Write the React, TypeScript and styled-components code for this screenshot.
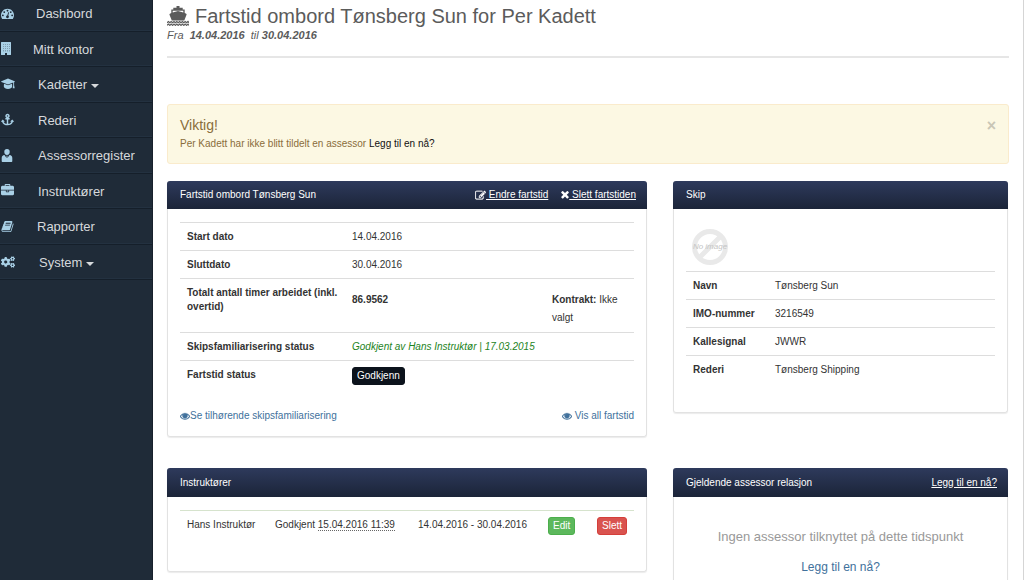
import React from "react";
import styled, { createGlobalStyle, css } from "styled-components";
import { FaAnchor, FaCogs } from "react-icons/fa";

const GlobalStyle = createGlobalStyle`
  *, *::before, *::after { box-sizing: border-box; }
  body {
    margin: 0;
    background: #fff;
    color: #333;
    font-family: "Liberation Sans", Arial, sans-serif;
    font-size: 10px;
    line-height: 14px;
  }
`;

/* ---------- icons ---------- */

const Svg = styled.svg`
  display: inline-block;
  flex: none;
  fill: currentColor;
`;

type IconProps = { size?: number };

const EyeIcon = ({ size = 10 }: IconProps) => (
  <Svg width={size} height={size} viewBox="0 0 1792 1792" stroke="currentColor" strokeWidth="60" aria-hidden>
    <path d="M1664 960q-152-236-381-353 61 104 61 225 0 185-131.5 316.5t-316.5 131.5-316.5-131.5-131.5-316.5q0-121 61-225-229 117-381 353 133 205 333.5 326.5t434.5 121.5 434.5-121.5 333.5-326.5zm-720-384q0-20-14-34t-34-14q-125 0-214.5 89.5t-89.5 214.5q0 20 14 34t34 14 34-14 14-34q0-86 61-147t147-61q20 0 34-14t14-34zm848 384q0 34-20 69-140 230-376.5 368.5t-499.5 138.5-499.5-139-376.5-368q-20-35-20-69t20-69q140-229 376.5-368t499.5-139 499.5 139 376.5 368q20 35 20 69z" />
    <circle cx="896" cy="850" r="330" />
  </Svg>
);

const TimesIcon = ({ size = 10 }: IconProps) => (
  <Svg width={size} height={size} viewBox="270 370 1250 1250" aria-hidden>
    <path d="M1490 1322q0 40-28 68l-136 136q-28 28-68 28t-68-28l-294-294-294 294q-28 28-68 28t-68-28l-136-136q-28-28-28-68t28-68l294-294-294-294q-28-28-28-68t28-68l136-136q28-28 68-28t68 28l294 294 294-294q28-28 68-28t68 28l136 136q28 28 28 68t-28 68l-294 294 294 294q28 28 28 68z" />
  </Svg>
);

const EditIcon = ({ size = 10 }: IconProps) => (
  <Svg width={size} height={size} viewBox="0 0 1792 1792" stroke="currentColor" strokeWidth="40" aria-hidden>
    <path d="M888 1184l116-116-152-152-116 116v56h96v96h56zm440-720q-16-16-33 1l-350 350q-17 17-1 33t33-1l350-350q17-17 1-33zm80 594v190q0 119-84.5 203.5t-203.5 84.5h-832q-119 0-203.5-84.5t-84.5-203.5v-832q0-119 84.5-203.5t203.5-84.5h832q63 0 117 25 15 7 18 23 3 17-9 29l-49 49q-14 14-32 8-23-6-45-6h-832q-66 0-113 47t-47 113v832q0 66 47 113t113 47h832q66 0 113-47t47-113v-126q0-13 9-22l64-64q15-15 35-7t20 29zm-96-738l288 288-672 672h-288v-288zm444 132l-92 92-288-288 92-92q28-28 68-28t68 28l152 152q28 28 28 68t-28 68z" />
  </Svg>
);

const DashboardIcon = () => (
  <Svg width={13} height={13} viewBox="0 0 1792 1792" aria-hidden>
    <path d="M384 1152q0-53-37.5-90.5t-90.5-37.5-90.5 37.5-37.5 90.5 37.5 90.5 90.5 37.5 90.5-37.5 37.5-90.5zm192-448q0-53-37.5-90.5t-90.5-37.5-90.5 37.5-37.5 90.5 37.5 90.5 90.5 37.5 90.5-37.5 37.5-90.5zm428 481l101-382q6-26-7.5-48.5t-38.5-29.5-48 6.5-30 39.5l-101 382q-60 5-107 43.5t-63 98.5q-20 77 20 146t117 89 146-20 89-117q16-60-6-117t-72-91zm660-33q0-53-37.5-90.5t-90.5-37.5-90.5 37.5-37.5 90.5 37.5 90.5 90.5 37.5 90.5-37.5 37.5-90.5zm-640-640q0-53-37.5-90.5t-90.5-37.5-90.5 37.5-37.5 90.5 37.5 90.5 90.5 37.5 90.5-37.5 37.5-90.5zm448 192q0-53-37.5-90.5t-90.5-37.5-90.5 37.5-37.5 90.5 37.5 90.5 90.5 37.5 90.5-37.5 37.5-90.5zm320 448q0 261-141 483-19 29-54 29h-1402q-35 0-54-29-141-221-141-483 0-182 71-348t191-286 286-191 348-71 348 71 286 191 191 286 71 348z" />
  </Svg>
);

const BuildingIcon = () => (
  <Svg width={10} height={13} viewBox="0 0 10 13" aria-hidden>
    <path
      fillRule="evenodd"
      d="M.5 0h9a.5.5 0 0 1 .5.5v12a.5.5 0 0 1-.5.5H6v-2H4v2H.5a.5.5 0 0 1-.5-.5V.5A.5.5 0 0 1 .5 0zM2.200 2v.6h.6V2zM4.200 2v.6h.6V2zM6.200 2v.6h.6V2zM8 2v.6h.6V2zM2.200 4.200v.6h.6v-.6zM4.200 4.200v.6h.6v-.6zM6.200 4.200v.6h.6v-.6zM8 4.200v.6h.6v-.6zM2.200 6.400v.6h.6v-.6zM4.200 6.400v.6h.6v-.6zM6.200 6.400v.6h.6v-.6zM8 6.400v.6h.6v-.6zM2.200 8.600v.6h.6v-.6zM4.200 8.600v.6h.6v-.6zM6.200 8.600v.6h.6v-.6zM8 8.600v.6h.6v-.6z"
    />
  </Svg>
);

const CapIcon = () => (
  <Svg width={14} height={12} viewBox="0 0 14 12" aria-hidden>
    <path d="M7 .5l6.600 2.700c.4.200.4.600 0 .8L7 6.500.4 4c-.4-.2-.4-.6 0-.8z" />
    <path d="M3 5.700l4 1.600 4-1.600.2 2.800C11 10 9.200 10.900 7 10.900S3 10 2.800 8.500z" />
    <path d="M12.200 3.800h.9v3.400l.6 3h-2l.5-3z" />
  </Svg>
);

const AssessorIcon = () => (
  <Svg width={12} height={13} viewBox="0 0 12 13" aria-hidden>
    <path d="M6 0a2.700 2.800 0 0 1 2.700 2.900C8.700 4.600 7.600 6 6 6S3.300 4.600 3.300 2.900A2.700 2.800 0 0 1 6 0zM3.500 6.100L5.500 9l.2-1.600-.5-.7h1.600l-.5.7.2 1.600 2-2.900c1.800.3 2.800 1.100 2.800 3V12c0 .6-.4 1-1 1H1.700c-.6 0-1-.4-1-1V9.100c0-1.900 1-2.700 2.800-3z" />
  </Svg>
);

const BriefcaseIcon = () => (
  <Svg width={13} height={13} viewBox="0 0 1792 1792" aria-hidden>
    <path d="M640 256h512v-128h-512v128zm1152 640v480q0 66-47 113t-113 47h-1472q-66 0-113-47t-47-113v-480h672v160q0 26 19 45t45 19h320q26 0 45-19t19-45v-160h672zm-768 0v128h-256v-128h256zm768-480v384h-1792v-384q0-66 47-113t113-47h352v-160q0-40 28-68t68-28h576q40 0 68 28t28 68v160h352q66 0 113 47t47 113z" />
  </Svg>
);

const BookIcon = () => (
  <Svg width={13} height={13} viewBox="0 0 1792 1792" aria-hidden>
    <path d="M1703 478q40 57 18 129l-275 906q-19 64-76.5 107.5t-122.5 43.5h-923q-77 0-148.5-53.5t-99.5-131.5q-24-67-2-127 0-4 3-27t4-37q1-8-3-21.5t-3-19.5q2-11 8-21t16.5-23.5 16.5-23.5q23-38 45-91.5t30-91.5q3-10 .5-30t-.5-28q3-11 17-28t17-23q21-36 42-92t25-90q1-9-2.5-32t.5-28q4-13 22-30.5t22-22.5q19-26 42.5-84.5t27.5-96.5q1-8-3-25.5t-2-26.5q2-8 9-18t18-23 17-21q8-12 16.5-30.5t15-35 16-36 19.5-32 26.5-23.5 36-11.5 47.5 5.500l-1 3q38-9 51-9h761q74 0 114 56t18 130l-274 906q-36 119-71.5 153.5t-128.5 34.5h-869q-27 0-38 15-11 16-1 43 24 70 144 70h923q29 0 56-15.5t35-41.5l300-987q7-22 5-57 38 15 59 43zm-1064 2q-4 13 2 22.5t20 9.500h608q13 0 25.5-9.500t16.5-22.5l21-64q4-13-2-22.5t-20-9.500h-608q-13 0-25.5 9.500t-16.5 22.5zm-83 256q-4 13 2 22.5t20 9.500h608q13 0 25.5-9.500t16.5-22.5l21-64q4-13-2-22.5t-20-9.500h-608q-13 0-25.5 9.500t-16.5 22.5z" />
  </Svg>
);

const ShipIcon = () => (
  <Svg width={22} height={20} viewBox="0 0 22 20" aria-hidden>
    <path d="M9.500 0h3v1.800h3.200V3.500h2V7l1.500.8c.5.200.6.6.3 1L17.300 14.500H4.800L2.500 8.800c-.2-.4-.1-.8.400-1L4.300 7V3.500h2V1.800h3.200zM5.700 4.700v1.700L11 4.900l5.300 1.500V4.700z" />
    <path
      d="M0 16.800l1.400-1.300 1.400 1.300 1.400-1.300 1.400 1.300L7 15.500l1.400 1.300 1.400-1.300 1.400 1.300 1.400-1.300 1.400 1.300 1.400-1.300 1.400 1.300 1.400-1.300 1.400 1.300 1.400-1.300L22 16.800M0 19.400l1.400-1.300 1.400 1.300 1.400-1.300 1.400 1.300L7 18.100l1.400 1.300 1.400-1.300 1.400 1.300 1.400-1.300 1.400 1.300 1.400-1.300 1.400 1.300 1.400-1.300 1.400 1.300 1.400-1.300L22 19.400"
      fill="none"
      stroke="currentColor"
      strokeWidth="1.200"
    />
  </Svg>
);

const NoImage = () => (
  <Svg width={38} height={38} viewBox="0 0 38 38" role="img" aria-label="No image">
    <circle cx="19" cy="19" r="15.500" fill="none" stroke="#e9e9e9" strokeWidth="5" />
    <path d="M8.500 29.500l21-21" stroke="#e9e9e9" strokeWidth="5" />
    <text x="19" y="21" textAnchor="middle" fontSize="8" fontStyle="italic" fill="#c4c4c4">
      No image
    </text>
  </Svg>
);

/* ---------- frame ---------- */

const Page = styled.div`
  display: flex;
  min-height: 100vh;
  max-height: 100vh;
  overflow: hidden;
  border-right: 1px solid #d5d5d5;
`;

const Sidebar = styled.nav`
  flex: 0 0 153px;
  background: #1f2b38;
  border-right: 1px solid #17202c;
`;

const Menu = styled.ul`
  display: grid;
  grid-auto-rows: 1fr;
  height: 284px;
  margin: -4px 0 0;
  padding: 0;
  list-style: none;
`;

const MenuItem = styled.li`
  border-bottom: 1px solid #151f2a;
  box-shadow: inset 0 -1px 0 #233140;
`;

const MenuLink = styled.a`
  display: flex;
  align-items: center;
  height: 100%;
  padding: 2px 0 0 1px;
  color: #d6d9dc;
  font-size: 13px;
  line-height: 18px;
  text-decoration: none;
`;

const MenuIcon = styled.span<{ $width: number }>`
  display: flex;
  flex: 0 0 ${(p) => p.$width}px;
  margin: 0 22px 2px 0;
  color: #a9d0e6;
`;

const Caret = styled.span`
  margin: 2px 0 0 4px;
  border: 4px solid transparent;
  border-top-color: currentColor;
  border-bottom: 0;
`;

const Main = styled.main`
  flex: 1;
  min-width: 0;
  padding: 4px 14px 0;
`;

const PageHeader = styled.header`
  margin-bottom: 46px;
  padding-bottom: 14px;
  border-bottom: 2px solid #e6e6e6;
  color: #5b5b5b;
`;

const Title = styled.h1`
  display: flex;
  align-items: center;
  gap: 6px;
  margin: 0;
  font-size: 20px;
  font-weight: 400;
  line-height: 24px;
`;

const Period = styled.p`
  margin: 0;
  font-size: 11px;
  font-style: italic;
  line-height: 14px;
  white-space: pre;
`;

/* ---------- alert ---------- */

const Alert = styled.section`
  display: flex;
  justify-content: space-between;
  align-items: flex-start;
  margin-bottom: 17px;
  padding: 11px 12px;
  border: 1px solid #faebcc;
  border-radius: 3px;
  background: #fcf8e3;
  color: #8a6d3b;
`;

const AlertTitle = styled.h2`
  margin: 0 0 2px;
  font-size: 14px;
  font-weight: 400;
  line-height: 18px;
`;

const AlertText = styled.p`
  margin: 0;
  line-height: 16px;
`;

const CloseButton = styled.button`
  padding: 0;
  border: 0;
  background: none;
  color: #c9c6b6;
  font: bold 16px/20px "Liberation Sans", Arial, sans-serif;
`;

/* ---------- links and buttons ---------- */

const Link = styled.a<{ $tone?: "dark" | "light" }>`
  color: #41719c;
  text-decoration: none;
  ${(p) => p.$tone === "dark" && css`color: #111;`}
  ${(p) => p.$tone === "light" && css`color: #fff; text-decoration: underline;`}
`;

const IconLink = styled(Link)`
  display: inline-flex;
  align-items: center;
  white-space: pre;
`;

const tones = {
  dark: ["#0c131c", "#0c131c"],
  green: ["#5cb85c", "#4cae4c"],
  red: ["#d9534f", "#d43f3a"],
};

const SmallButton = styled.button<{ $tone: keyof typeof tones }>`
  display: block;
  padding: 1px 4px;
  border: 1px solid ${(p) => tones[p.$tone][1]};
  border-radius: 3px;
  background: ${(p) => tones[p.$tone][0]};
  color: #fff;
  font: 10px/14px "Liberation Sans", Arial, sans-serif;
`;

/* ---------- panels ---------- */

const Panels = styled.div`
  display: grid;
  grid-template-columns: 480fr 335fr;
  gap: 31px 26px;
  align-items: start;
  padding-right: 1px;
`;

const Panel = styled.section`
  min-width: 0;
  border: 1px solid #e2e2e2;
  border-top: 0;
  border-radius: 3px;
  box-shadow: 0 1px 1px rgba(0, 0, 0, 0.08);
`;

const PanelHead = styled.header<{ $tall?: boolean }>`
  display: flex;
  justify-content: space-between;
  align-items: center;
  height: ${(p) => (p.$tall ? 29 : 28)}px;
  margin: 0 -1px;
  padding: 0 11px 0 13px;
  border-radius: 3px 3px 0 0;
  background: linear-gradient(#2e3a5c, #1b2438);
  color: #fff;
`;

const PanelTitle = styled.h3`
  margin: 0;
  font-size: 10px;
  font-weight: 400;
`;

const PanelActions = styled.div`
  display: flex;
  gap: 13px;
`;

const PanelBody = styled.div<{ $bottom?: number }>`
  padding: 13px 12px ${(p) => p.$bottom ?? 12}px;
`;

const Table = styled.table`
  width: 100%;
  border-collapse: collapse;
  table-layout: fixed;
`;

const cell = css`
  padding: 7px 7px 6px;
  border-top: 1px solid #ddd;
  text-align: left;
  vertical-align: top;
`;

const Th = styled.th`
  ${cell}
  font-weight: 700;
`;

const Td = styled.td<{ $roomy?: boolean; $control?: boolean; $success?: boolean }>`
  ${cell}
  ${(p) => p.$roomy && css`padding: 12px 7px 5px; line-height: 18px;`}
  ${(p) => p.$control && css`padding: 6px 7px 5px;`}
  ${(p) => p.$success && css`border-top-color: #d6e3cd;`}
`;

const Approved = styled.em`
  color: #1d831d;
`;

const Stamp = styled.abbr`
  border-bottom: 1px dotted #666;
  text-decoration: none;
`;

const FootLinks = styled.div`
  display: flex;
  justify-content: space-between;
  margin-top: 19px;
`;

const Picture = styled.div`
  display: flex;
  padding: 6px 5px 5px;
`;

const Empty = styled.div`
  padding: 18px 0 16px;
  color: #999;
  line-height: 18px;
  text-align: center;
`;

const EmptyText = styled.p<{ $small?: boolean }>`
  margin: 0 0 12px;
  font-size: ${(p) => (p.$small ? 12 : 13)}px;
`;

const menu = [
  { label: "Dashbord", icon: <DashboardIcon />, width: 11 },
  { label: "Mitt kontor", icon: <BuildingIcon />, width: 10 },
  { label: "Kadetter", icon: <CapIcon />, width: 15, sub: true },
  { label: "Rederi", icon: <FaAnchor size={13} />, width: 15 },
  { label: "Assessorregister", icon: <AssessorIcon />, width: 15 },
  { label: "Instruktører", icon: <BriefcaseIcon />, width: 15 },
  { label: "Rapporter", icon: <BookIcon />, width: 14 },
  { label: "System", icon: <FaCogs size={14} />, width: 16, sub: true },
];

const ship = [
  ["Navn", "Tønsberg Sun"],
  ["IMO-nummer", "3216549"],
  ["Kallesignal", "JWWR"],
  ["Rederi", "Tønsberg Shipping"],
];

export default function App() {
  return (
    <>
      <GlobalStyle />
      <Page>
        <Sidebar>
          <Menu>
            {menu.map((m) => (
              <MenuItem key={m.label}>
                <MenuLink href="#">
                  <MenuIcon $width={m.width}>{m.icon}</MenuIcon>
                  {m.label}
                  {m.sub && <Caret />}
                </MenuLink>
              </MenuItem>
            ))}
          </Menu>
        </Sidebar>
        <Main>
          <PageHeader>
            <Title>
              <ShipIcon />
              Fartstid ombord Tønsberg Sun for Per Kadett
            </Title>
            <Period>
              Fra{"  "}<b>14.04.2016</b>{"  "}til <b>30.04.2016</b>
            </Period>
          </PageHeader>

          <Alert role="alert">
            <div>
              <AlertTitle>Viktig!</AlertTitle>
              <AlertText>
                Per Kadett har ikke blitt tildelt en assessor{" "}
                <Link href="#" $tone="dark">Legg til en nå?</Link>
              </AlertText>
            </div>
            <CloseButton type="button" aria-label="Lukk">×</CloseButton>
          </Alert>

          <Panels>
            <Panel>
              <PanelHead>
                <PanelTitle>Fartstid ombord Tønsberg Sun</PanelTitle>
                <PanelActions>
                  <IconLink href="#" $tone="light"><EditIcon size={11} /> Endre fartstid</IconLink>
                  <IconLink href="#" $tone="light"><TimesIcon size={8} /> Slett fartstiden</IconLink>
                </PanelActions>
              </PanelHead>
              <PanelBody $bottom={13}>
                <Table>
                  <colgroup>
                    <col width="165" />
                    <col />
                    <col width="89" />
                  </colgroup>
                  <tbody>
                    <tr><Th scope="row">Start dato</Th><Td colSpan={2}>14.04.2016</Td></tr>
                    <tr><Th scope="row">Sluttdato</Th><Td colSpan={2}>30.04.2016</Td></tr>
                    <tr>
                      <Th scope="row">Totalt antall timer arbeidet (inkl. overtid)</Th>
                      <Td $roomy><b>86.9562</b></Td>
                      <Td $roomy><b>Kontrakt:</b> Ikke valgt</Td>
                    </tr>
                    <tr>
                      <Th scope="row">Skipsfamiliarisering status</Th>
                      <Td colSpan={2}><Approved>Godkjent av Hans Instruktør | 17.03.2015</Approved></Td>
                    </tr>
                    <tr>
                      <Th scope="row">Fartstid status</Th>
                      <Td colSpan={2} $control>
                        <SmallButton type="button" $tone="dark">Godkjenn</SmallButton>
                      </Td>
                    </tr>
                  </tbody>
                </Table>
                <FootLinks>
                  <IconLink href="#"><EyeIcon />Se tilhørende skipsfamiliarisering</IconLink>
                  <IconLink href="#"><EyeIcon /> Vis all fartstid</IconLink>
                </FootLinks>
              </PanelBody>
            </Panel>

            <Panel>
              <PanelHead><PanelTitle>Skip</PanelTitle></PanelHead>
              <PanelBody $bottom={29}>
                <Picture><NoImage /></Picture>
                <Table>
                  <colgroup>
                    <col width="82" />
                    <col />
                  </colgroup>
                  <tbody>
                    {ship.map(([name, value]) => (
                      <tr key={name}><Th scope="row">{name}</Th><Td>{value}</Td></tr>
                    ))}
                  </tbody>
                </Table>
              </PanelBody>
            </Panel>

            <Panel>
              <PanelHead $tall><PanelTitle>Instruktører</PanelTitle></PanelHead>
              <PanelBody $bottom={31}>
                <Table>
                  <colgroup>
                    <col width="88" />
                    <col width="143" />
                    <col />
                    <col width="49" />
                    <col width="44" />
                  </colgroup>
                  <tbody>
                    <tr>
                      <Td $success>Hans Instruktør</Td>
                      <Td $success>Godkjent <Stamp>15.04.2016 11:39</Stamp></Td>
                      <Td $success>14.04.2016 - 30.04.2016</Td>
                      <Td $success $control><SmallButton type="button" $tone="green">Edit</SmallButton></Td>
                      <Td $success $control><SmallButton type="button" $tone="red">Slett</SmallButton></Td>
                    </tr>
                  </tbody>
                </Table>
              </PanelBody>
            </Panel>

            <Panel>
              <PanelHead $tall>
                <PanelTitle>Gjeldende assessor relasjon</PanelTitle>
                <Link href="#" $tone="light">Legg til en nå?</Link>
              </PanelHead>
              <PanelBody>
                <Empty>
                  <EmptyText>Ingen assessor tilknyttet på dette tidspunkt</EmptyText>
                  <EmptyText $small><Link href="#">Legg til en nå?</Link></EmptyText>
                </Empty>
              </PanelBody>
            </Panel>
          </Panels>
        </Main>
      </Page>
    </>
  );
}
